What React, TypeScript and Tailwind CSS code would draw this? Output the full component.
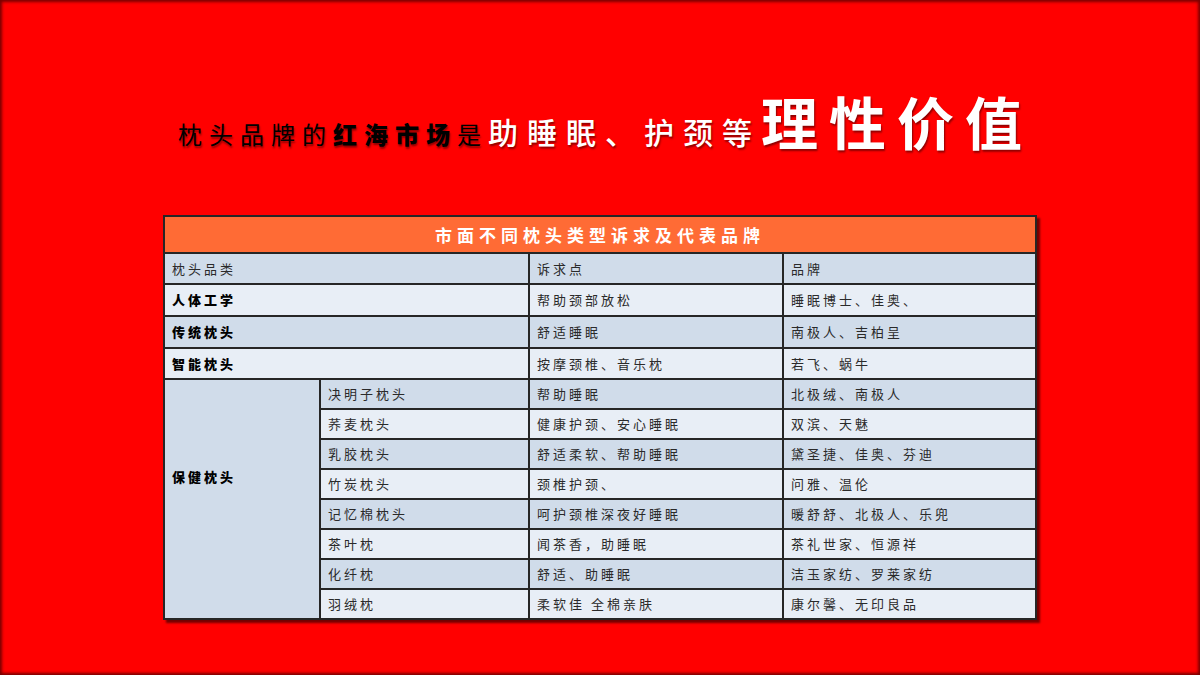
const rows = [
  { name: "决明子枕头", appeal: "帮助睡眠", brand: "北极绒、南极人" },
  { name: "荞麦枕头", appeal: "健康护颈、安心睡眠", brand: "双滨、天魅" },
  { name: "乳胶枕头", appeal: "舒适柔软、帮助睡眠", brand: "黛圣捷、佳奥、芬迪" },
  { name: "竹炭枕头", appeal: "颈椎护颈、", brand: "问雅、温伦" },
  { name: "记忆棉枕头", appeal: "呵护颈椎深夜好睡眠", brand: "暖舒舒、北极人、乐兜" },
  { name: "茶叶枕", appeal: "闻茶香，助睡眠", brand: "茶礼世家、恒源祥" },
  { name: "化纤枕", appeal: "舒适、助睡眠", brand: "洁玉家纺、罗莱家纺" },
  { name: "羽绒枕", appeal: "柔软佳 全棉亲肤", brand: "康尔馨、无印良品" },
];

const topRows = [
  { name: "人体工学", appeal: "帮助颈部放松", brand: "睡眠博士、佳奥、", h: "h-[32px]" },
  { name: "传统枕头", appeal: "舒适睡眠", brand: "南极人、吉柏呈", h: "h-[32px]" },
  { name: "智能枕头", appeal: "按摩颈椎、音乐枕", brand: "若飞、蜗牛", h: "h-[31px]" },
];

const blue = "bg-[#d0dcea]";
const light = "bg-[#e8eef6]";
const cell = "border-2 border-[#262626] px-[7px] text-left align-middle";

function App() {
  return (
    <main
      className="flex h-[675px] w-[1200px] flex-col items-center overflow-hidden bg-[#ff0000] shadow-[inset_0_0_3px_2px_#7a0000]"
      style={{ fontFamily: '"Noto Sans CJK SC", "Noto Sans", sans-serif' }}
    >
      <h1 className="mt-[92px] flex items-end leading-none [text-shadow:1px_2px_2px_rgba(0,0,0,0.45)]">
        <span className="text-[24px] tracking-[7px] text-black">
          枕头品牌的<b className="font-black">红海市场</b>是
        </span>
        <span className="text-[30px] font-medium tracking-[9px] text-white">
          助睡眠、护颈等
        </span>
        <span className="-mr-[11px] -mb-[3px] text-[57px] font-bold tracking-[11px] text-white">
          理性价值
        </span>
      </h1>

      <table className="mt-[69px] w-[872px] table-fixed border-collapse border-2 border-[#262626] text-[13px] tracking-[3px] text-[#2a2a2a] shadow-[3px_3px_2px_rgba(0,0,0,0.55)]">
        <colgroup>
          <col className="w-[156px]" />
          <col className="w-[209px]" />
          <col className="w-[254px]" />
          <col className="w-[253px]" />
        </colgroup>
        <tbody>
          <tr className="h-[37px] bg-[#ff6b35]">
            <th
              colSpan={4}
              className="border-2 border-[#262626] text-center text-[17px] font-bold tracking-[5px] text-white"
            >
              市面不同枕头类型诉求及代表品牌
            </th>
          </tr>
          <tr className={`h-[31px] ${blue}`}>
            <td colSpan={2} className={cell}>
              枕头品类
            </td>
            <td className={cell}>诉求点</td>
            <td className={cell}>品牌</td>
          </tr>
          {topRows.map((r, i) => (
            <tr key={r.name} className={`${r.h} ${i % 2 === 0 ? light : blue}`}>
              <td colSpan={2} className={`${cell} font-black text-black`}>
                {r.name}
              </td>
              <td className={cell}>{r.appeal}</td>
              <td className={cell}>{r.brand}</td>
            </tr>
          ))}
          {rows.map((r, i) => (
            <tr key={r.name} className={`h-[30px] ${i % 2 === 0 ? blue : light}`}>
              {i === 0 && (
                <td rowSpan={8} className={`${cell} ${blue} pb-[44px] font-black text-black`}>
                  保健枕头
                </td>
              )}
              <td className={cell}>{r.name}</td>
              <td className={cell}>{r.appeal}</td>
              <td className={cell}>{r.brand}</td>
            </tr>
          ))}
        </tbody>
      </table>
    </main>
  );
}

export default App;
